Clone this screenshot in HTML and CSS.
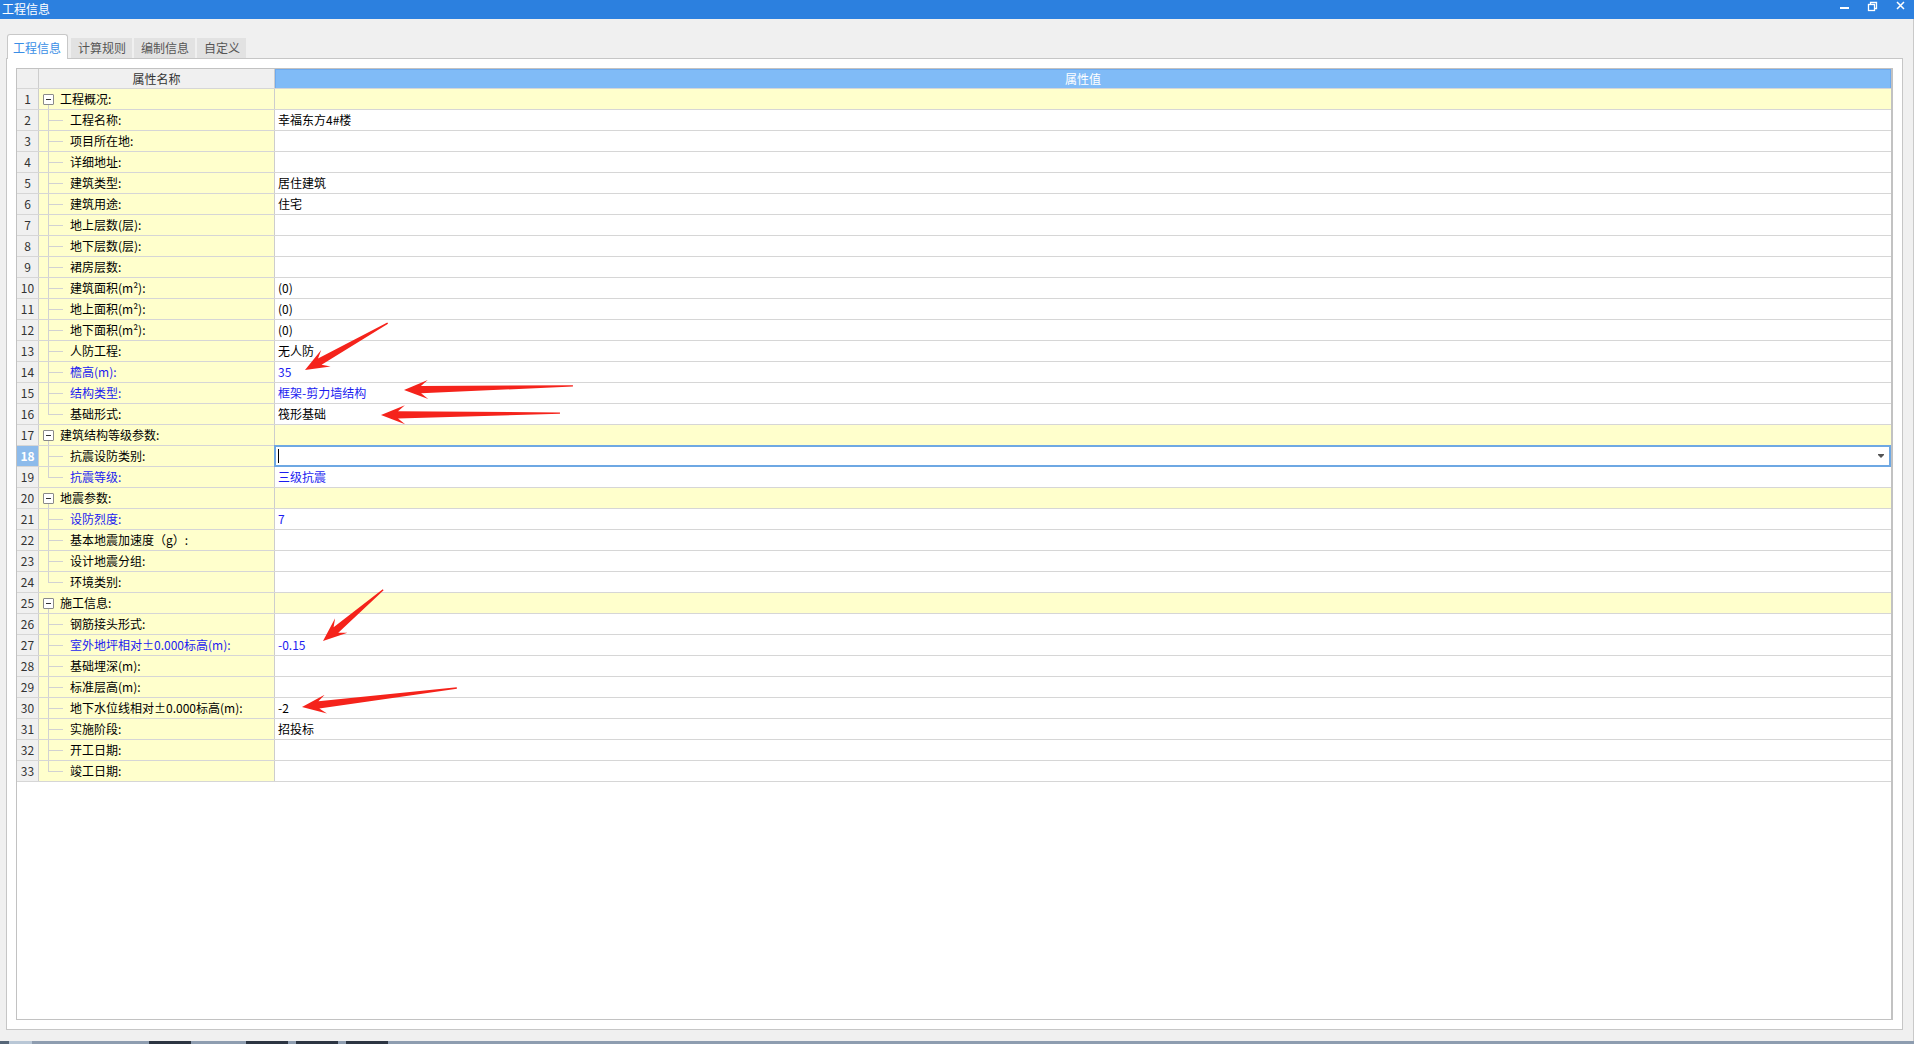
FILE: index.html
```html
<!DOCTYPE html>
<html lang="zh-CN">
<head>
<meta charset="utf-8">
<title>工程信息</title>
<link rel="stylesheet" href="styles.css">
</head>
<body>
<div class="titlebar">
  <div class="title">工程信息</div>
  <svg class="controls" width="80" height="19" viewBox="0 0 80 19">
    <rect x="6" y="7" width="9" height="2" fill="#fff"/>
    <rect x="34.5" y="4.5" width="6" height="6" fill="none" stroke="#fff" stroke-width="1.3"/>
    <path d="M36.5 4.5 V2.5 H42.5 V8.5 H40.5" fill="none" stroke="#fff" stroke-width="1.3"/>
    <path d="M63 2 L70 9 M70 2 L63 9" stroke="#fff" stroke-width="1.5"/>
  </svg>
</div>
<div class="frame">
  <div class="tabs">
    <div class="tab active">工程信息</div>
    <div class="tab">计算规则</div>
    <div class="tab">编制信息</div>
    <div class="tab">自定义</div>
  </div>
  <div class="panel">
    <div class="grid">
      <div class="row hdr"><div class="num"></div><div class="name">属性名称</div><div class="val">属性值</div></div>
      <div class="row grp"><div class="num">1</div><div class="name"><span class="box"></span>工程概况:</div><div class="val"></div></div>
      <div class="row"><div class="num">2</div><div class="name"><span class="guide"></span>工程名称:</div><div class="val">幸福东方4#楼</div></div>
      <div class="row"><div class="num">3</div><div class="name"><span class="guide"></span>项目所在地:</div><div class="val"></div></div>
      <div class="row"><div class="num">4</div><div class="name"><span class="guide"></span>详细地址:</div><div class="val"></div></div>
      <div class="row"><div class="num">5</div><div class="name"><span class="guide"></span>建筑类型:</div><div class="val">居住建筑</div></div>
      <div class="row"><div class="num">6</div><div class="name"><span class="guide"></span>建筑用途:</div><div class="val">住宅</div></div>
      <div class="row"><div class="num">7</div><div class="name"><span class="guide"></span>地上层数(层):</div><div class="val"></div></div>
      <div class="row"><div class="num">8</div><div class="name"><span class="guide"></span>地下层数(层):</div><div class="val"></div></div>
      <div class="row"><div class="num">9</div><div class="name"><span class="guide"></span>裙房层数:</div><div class="val"></div></div>
      <div class="row"><div class="num">10</div><div class="name"><span class="guide"></span>建筑面积(m²):</div><div class="val">(0)</div></div>
      <div class="row"><div class="num">11</div><div class="name"><span class="guide"></span>地上面积(m²):</div><div class="val">(0)</div></div>
      <div class="row"><div class="num">12</div><div class="name"><span class="guide"></span>地下面积(m²):</div><div class="val">(0)</div></div>
      <div class="row"><div class="num">13</div><div class="name"><span class="guide"></span>人防工程:</div><div class="val">无人防</div></div>
      <div class="row"><div class="num">14</div><div class="name blue"><span class="guide"></span>檐高(m):</div><div class="val blue">35</div></div>
      <div class="row"><div class="num">15</div><div class="name blue"><span class="guide"></span>结构类型:</div><div class="val blue">框架-剪力墙结构</div></div>
      <div class="row"><div class="num">16</div><div class="name"><span class="guide last"></span>基础形式:</div><div class="val">筏形基础</div></div>
      <div class="row grp"><div class="num">17</div><div class="name"><span class="box"></span>建筑结构等级参数:</div><div class="val"></div></div>
      <div class="row"><div class="num sel">18</div><div class="name"><span class="guide"></span>抗震设防类别:</div><div class="val editing"><span class="caret"></span><svg class="drop" width="6" height="4" viewBox="0 0 6 4"><path d="M0 0 H6 V1 L3 4 L0 1 Z" fill="#555"/></svg></div></div>
      <div class="row"><div class="num">19</div><div class="name blue"><span class="guide last"></span>抗震等级:</div><div class="val blue">三级抗震</div></div>
      <div class="row grp"><div class="num">20</div><div class="name"><span class="box"></span>地震参数:</div><div class="val"></div></div>
      <div class="row"><div class="num">21</div><div class="name blue"><span class="guide"></span>设防烈度:</div><div class="val blue">7</div></div>
      <div class="row"><div class="num">22</div><div class="name"><span class="guide"></span>基本地震加速度（g）:</div><div class="val"></div></div>
      <div class="row"><div class="num">23</div><div class="name"><span class="guide"></span>设计地震分组:</div><div class="val"></div></div>
      <div class="row"><div class="num">24</div><div class="name"><span class="guide last"></span>环境类别:</div><div class="val"></div></div>
      <div class="row grp"><div class="num">25</div><div class="name"><span class="box"></span>施工信息:</div><div class="val"></div></div>
      <div class="row"><div class="num">26</div><div class="name"><span class="guide"></span>钢筋接头形式:</div><div class="val"></div></div>
      <div class="row"><div class="num">27</div><div class="name blue"><span class="guide"></span>室外地坪相对±0.000标高(m):</div><div class="val blue">-0.15</div></div>
      <div class="row"><div class="num">28</div><div class="name"><span class="guide"></span>基础埋深(m):</div><div class="val"></div></div>
      <div class="row"><div class="num">29</div><div class="name"><span class="guide"></span>标准层高(m):</div><div class="val"></div></div>
      <div class="row"><div class="num">30</div><div class="name"><span class="guide"></span>地下水位线相对±0.000标高(m):</div><div class="val">-2</div></div>
      <div class="row"><div class="num">31</div><div class="name"><span class="guide"></span>实施阶段:</div><div class="val">招投标</div></div>
      <div class="row"><div class="num">32</div><div class="name"><span class="guide"></span>开工日期:</div><div class="val"></div></div>
      <div class="row"><div class="num">33</div><div class="name"><span class="guide last"></span>竣工日期:</div><div class="val"></div></div>
    </div>
  </div>
</div>
<div class="strip">
  <span class="seg s1"></span><span class="seg s2"></span><span class="seg s3"></span><span class="seg s4"></span><span class="seg s3 w2"></span><span class="seg s4"></span><span class="seg s5"></span><span class="seg s4"></span><span class="seg s5"></span><span class="seg s4"></span>
</div>
<svg class="arrows" width="1914" height="1044" viewBox="0 0 1914 1044">
  <g fill="#f5231b">
    <polygon transform="translate(305 370) rotate(150.5)" points="-95,-0.7 -17,-3.6 -24,-9.5 0,0 -24,9.5 -17,3.6 -95,0.7"/>
    <polygon transform="translate(404 390) rotate(178.6)" points="-169,-0.7 -17,-3.6 -24,-9.5 0,0 -24,9.5 -17,3.6 -169,0.7"/>
    <polygon transform="translate(381 415) rotate(179.4)" points="-179,-0.7 -17,-3.6 -24,-9.5 0,0 -24,9.5 -17,3.6 -179,0.7"/>
    <polygon transform="translate(323 641) rotate(139.6)" points="-79,-0.7 -17,-3.6 -24,-9.5 0,0 -24,9.5 -17,3.6 -79,0.7"/>
    <polygon transform="translate(302 707) rotate(173)" points="-156,-0.7 -17,-3.6 -24,-9.5 0,0 -24,9.5 -17,3.6 -156,0.7"/>
  </g>
</svg>
</body>
</html>
```
FILE: styles.css
```css
html, body {
  margin: 0;
  padding: 0;
}
body {
  width: 1914px;
  height: 1044px;
  overflow: hidden;
  background: #f0f0f0;
  font-family: "Noto Sans CJK SC", "Noto Sans", sans-serif;
  font-size: 12px;
  color: #000;
  position: relative;
}
.titlebar {
  height: 19px;
  background: #2c80df;
  color: #fff;
  display: flex;
  justify-content: space-between;
}
.title {
  font-size: 12px;
  line-height: 18px;
  padding-left: 2px;
}
.controls {
  display: block;
}
.frame {
  height: 1022px;
  box-sizing: border-box;
  border-right: 1px solid #c9c9c9;
}
.tabs {
  height: 39px;
  box-sizing: border-box;
  display: flex;
  align-items: flex-end;
  padding-left: 7px;
  gap: 2px;
}
.tab {
  height: 20px;
  line-height: 20px;
  padding: 0 6px 0 7px;
  background: #e2e2e2;
  color: #555;
}
.tab.active {
  height: 25px;
  box-sizing: border-box;
  padding: 3px 6px 0 5px;
  line-height: 20px;
  background: #fff;
  color: #3a8ee6;
  border: 1px solid #c8c8c8;
  border-bottom: none;
  border-radius: 3px 3px 0 0;
  margin-bottom: -1px;
  margin-right: 1px;
  position: relative;
  z-index: 1;
}
.panel {
  margin-left: 6px;
  width: 1897px;
  height: 972px;
  box-sizing: border-box;
  border: 1px solid #c6c6c6;
  background: #fff;
  padding: 9px;
}
.grid {
  height: 100%;
  box-sizing: border-box;
  border: 1px solid #c2c2c2;
  border-right-width: 2px;
  background: #fff;
}
.row {
  display: flex;
  height: 21px;
  box-sizing: border-box;
  border-bottom: 1px solid #d6d6d6;
  line-height: 20px;
}
.num {
  width: 22px;
  flex: none;
  box-sizing: border-box;
  border-right: 1px solid #cdcdcd;
  background: #f0f0f0;
  text-align: center;
  color: #333;
}
.num.sel {
  background: #8dbbeb;
  color: #fff;
  font-weight: bold;
}
.name {
  width: 236px;
  flex: none;
  box-sizing: border-box;
  border-right: 1px solid #cdcdcd;
  background: #ffffcc;
  display: flex;
  align-items: center;
  padding-left: 4px;
  white-space: nowrap;
}
.val {
  flex: 1;
  padding-left: 3px;
  white-space: nowrap;
}
.blue {
  color: #1c1cf0;
}
.hdr {
  height: 20px;
  line-height: 19px;
}
.hdr .num {
  background: #f0f0f0;
}
.hdr .name {
  background: #f0f0f0;
  justify-content: center;
  padding-left: 0;
  color: #333;
}
.hdr .val {
  background: #80bbf7;
  color: #fff;
  text-align: center;
  padding-left: 0;
  box-sizing: border-box;
  border: 1px solid #6eaaee;
  border-bottom: none;
  line-height: 18px;
}
.grp .val {
  background: #ffffcc;
}
.grp .name {
  background: linear-gradient(#cfcfcf, #cfcfcf) 9px 15px / 1px 6px no-repeat, #ffffcc;
}
.box {
  width: 11px;
  height: 11px;
  flex: none;
  box-sizing: border-box;
  border: 1px solid #8a8a8a;
  border-radius: 1px;
  background: #fff;
  display: flex;
  align-items: center;
  justify-content: center;
  margin-right: 6px;
}
.box::before {
  content: "";
  width: 5px;
  height: 1px;
  background: #333;
}
.guide {
  width: 27px;
  flex: none;
  align-self: stretch;
  background:
    linear-gradient(#d2d2d2, #d2d2d2) 5px 0 / 1px 100% no-repeat,
    linear-gradient(#d2d2d2, #d2d2d2) 5px 10px / 15px 1px no-repeat;
}
.guide.last {
  background:
    linear-gradient(#d2d2d2, #d2d2d2) 5px 0 / 1px 11px no-repeat,
    linear-gradient(#d2d2d2, #d2d2d2) 5px 10px / 15px 1px no-repeat;
}
.val.editing {
  height: 22px;
  margin-top: -1px;
  margin-left: -1px;
  box-sizing: border-box;
  border: 2px solid #6ea8e3;
  background: #fff;
  padding-left: 0;
  display: flex;
  align-items: center;
  justify-content: space-between;
}
.caret {
  width: 1px;
  height: 14px;
  background: #000;
  margin-left: 2px;
}
.drop {
  display: block;
  margin-right: 5px;
}
.strip {
  margin-top: 0;
  height: 3px;
  display: flex;
  background: #8e9db0;
}
.seg {
  height: 3px;
  width: 40px;
}
.s1 { width: 9px; background: #566678; }
.s2 { width: 23px; background: #b9c7d6; }
.s3 { width: 113px; background: #8e9db0; }
.s3.w2 { width: 51px; }
.s4 { width: 42px; background: #2c3542; margin-left: 4px; }
.s5 { width: 4px; background: #8e9db0; }
.arrows {
  position: absolute;
  left: 0;
  top: 0;
  pointer-events: none;
}
```
